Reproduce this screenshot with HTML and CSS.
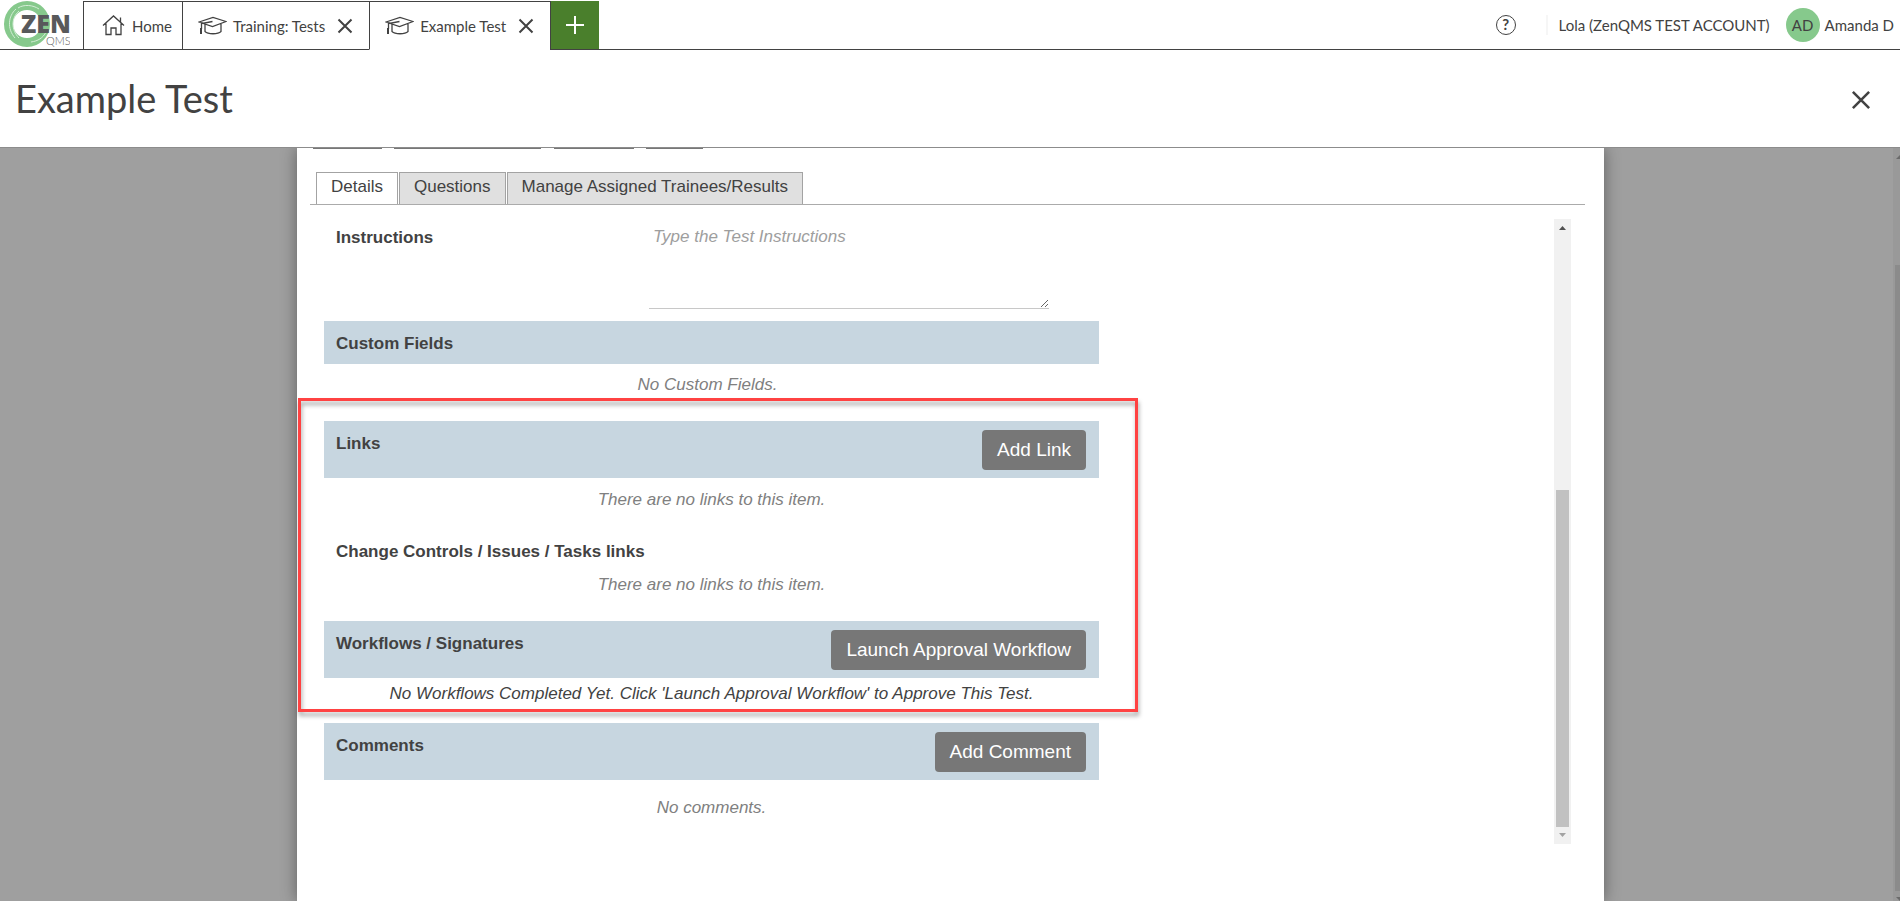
FILE: index.html
```html
<!DOCTYPE html>
<html lang="en">
<head>
<meta charset="utf-8">
<title>Example Test</title>
<link rel="stylesheet" href="styles.css">
</head>
<body>
<svg class="defs" aria-hidden="true">
  <symbol id="cap" viewBox="0 0 29 19">
    <path d="M1 6 L15 1.500 L28 5.500 L14.500 10.500 Z M14.500 5.500 L3.500 7.500 V13 M7 8.500 V15.500 C10 18.500 20 18.500 23 15.500 V8"/>
    <path class="tassel" d="M3 12 V18"/>
  </symbol>
  <symbol id="cross" viewBox="0 0 16 16"><path d="M1.500 1.500 L14.500 14.500 M14.500 1.500 L1.500 14.500"/></symbol>
</svg>
<header class="topbar">
  <a class="logo" href="#" aria-label="ZenQMS">
    <svg width="70" height="48" viewBox="0 0 70 48">
      <circle cx="27" cy="24" r="18.500" fill="none" stroke="#86c98c" stroke-width="9"/>
      <path d="M16 9 C8 16 7 29 15 38 M19 11 C11 18 11 30 19 38 M31 42 C38 41 43 38 46 32 M18 8 C24 4 33 5 39 9" fill="none" stroke="#d4edd6" stroke-width="1"/>
      <text class="logo-zen" x="21" y="33">ZEN</text>
      <text class="logo-qms" x="46" y="45">QMS</text>
    </svg>
  </a>
  <nav class="apptabs">
    <a class="apptab home" href="#">
      <svg class="icon" width="23" height="21" viewBox="0 0 23 21"><path d="M1 10.500 L11.500 1 L22 10.500 M4 8.500 V19.500 H9 V13 H14 V19.500 H19 V8.500 M18.500 7 V2.500"/></svg>
      <span>Home</span>
    </a>
    <div class="apptab">
      <svg class="icon" width="29" height="19"><use href="#cap"/></svg>
      <a href="#">Training: Tests</a>
      <button class="close" aria-label="Close Training: Tests"><svg class="icon bold" width="16" height="16"><use href="#cross"/></svg></button>
    </div>
    <div class="apptab active">
      <svg class="icon" width="29" height="19"><use href="#cap"/></svg>
      <a href="#">Example Test</a>
      <button class="close" aria-label="Close Example Test"><svg class="icon bold" width="16" height="16"><use href="#cross"/></svg></button>
    </div>
    <button class="newtab" aria-label="New tab"><svg width="20" height="20" viewBox="0 0 20 20"><path d="M10 1 V19 M1 10 H19"/></svg></button>
  </nav>
  <div class="account">
    <button class="help" aria-label="Help">?</button>
    <span class="company">Lola (ZenQMS TEST ACCOUNT)</span>
    <span class="avatar">AD</span>
    <span class="user">Amanda D</span>
  </div>
</header>
<div class="titlebar">
  <h1>Example Test</h1>
  <button class="close" aria-label="Close"><svg class="icon heavy" width="20" height="20"><use href="#cross"/></svg></button>
</div>
<main class="stage">
  <div class="panel">
    <div class="clipped"><i class="c1"></i><i class="c2"></i><i class="c3"></i><i class="c4"></i></div>
    <div class="tabs" role="tablist">
      <button class="tab selected" role="tab">Details</button>
      <button class="tab" role="tab">Questions</button>
      <button class="tab" role="tab">Manage Assigned Trainees/Results</button>
    </div>
    <div class="scroller">
      <div class="form">
        <div class="field">
          <label for="instructions">Instructions</label>
          <textarea id="instructions" placeholder="Type the Test Instructions"></textarea>
        </div>
        <div class="bar"><h2>Custom Fields</h2></div>
        <p class="note custom">No Custom Fields.</p>
        <div class="marked">
          <div class="bar tall"><h2>Links</h2><button class="action">Add Link</button></div>
          <p class="note links">There are no links to this item.</p>
          <h2 class="sub">Change Controls / Issues / Tasks links</h2>
          <p class="note sublinks">There are no links to this item.</p>
          <div class="bar tall"><h2>Workflows / Signatures</h2><button class="action">Launch Approval Workflow</button></div>
          <p class="note dark">No Workflows Completed Yet. Click 'Launch Approval Workflow' to Approve This Test.</p>
          <div class="marker"></div>
        </div>
        <div class="bar tall"><h2>Comments</h2><button class="action">Add Comment</button></div>
        <p class="note comments">No comments.</p>
      </div>
      <div class="scrollbar">
        <svg width="7" height="4" viewBox="0 0 7 4"><path d="M0 4 L3.500 0 L7 4 Z" fill="#505050"/></svg>
        <div class="track"><div class="thumb"></div></div>
        <svg width="7" height="4" viewBox="0 0 7 4"><path d="M0 0 L3.500 4 L7 0 Z" fill="#a3a3a3"/></svg>
      </div>
    </div>
  </div>
  <div class="pagebar">
    <svg width="5" height="4" viewBox="0 0 5 4"><path d="M1 4 L5 0 V4 Z" fill="#6a6a6a"/></svg>
    <div class="pagethumb"></div>
    <svg width="5" height="4" viewBox="0 0 5 4"><path d="M1 0 H5 V4 Z" fill="#6a6a6a"/></svg>
  </div>
</main>
</body>
</html>
```

FILE: styles.css
```css
* { box-sizing: border-box; }
body {
  margin: 0;
  min-height: 100vh;
  display: flex;
  flex-direction: column;
  color: #424242;
  background: #fff;
  font: 17px/20px "Liberation Sans", Arial, sans-serif;
}
button { font: inherit; color: inherit; border: 0; padding: 0; background: none; cursor: pointer; }
a { color: inherit; text-decoration: none; }
h1, h2, p { margin: 0; }
svg { display: block; flex: none; }
.defs { position: absolute; width: 0; height: 0; }
.icon { fill: none; stroke: #424242; stroke-width: 1.3px; }
.tassel { stroke-width: 2px; }
.bold { stroke-width: 2px; }
.heavy { stroke-width: 2px; }

.topbar {
  display: flex;
  height: 50px;
  font: 15px/20px Lato, sans-serif;
}
.logo { width: 83px; border-bottom: 1px solid #424242; }
.logo-zen { font: 800 25px "Open Sans", sans-serif; fill: #58595b; }
.logo-qms { font: 300 11px Lato, sans-serif; fill: #58595b; }
.apptabs { display: flex; padding-top: 1px; }
.apptab {
  display: flex;
  align-items: center;
  gap: 6px;
  padding: 0 16px 0 15px;
  border-top: 1px solid #424242;
  border-left: 1px solid #424242;
  border-bottom: 1px solid #424242;
}
.home { padding: 0 10px 0 18px; gap: 7px; }
.active { border-bottom-color: #fff; }
.apptab .close { margin-left: 6px; }
.newtab {
  display: grid;
  place-items: center;
  width: 49px;
  background: #4a7f2c;
  border-left: 1px solid #424242;
  border-bottom: 1px solid #424242;
}
.newtab path { fill: none; stroke: #fff; stroke-width: 2px; }
.account {
  flex: 1;
  display: flex;
  align-items: center;
  justify-content: flex-end;
  padding-right: 6px;
  border-bottom: 1px solid #424242;
}
.help {
  width: 20px;
  height: 20px;
  border: 1px solid #424242;
  border-radius: 50%;
  font-weight: 700;
  font-size: 15px;
  line-height: 17px;
  margin-right: 30px;
}
.company { padding-left: 11px; border-left: 2px solid #f6f6f6; }
.avatar {
  width: 34px;
  height: 34px;
  margin: 0 5px 0 16px;
  border-radius: 50%;
  background: #86c98c;
  line-height: 34px;
  text-align: center;
}

.titlebar {
  display: flex;
  align-items: center;
  justify-content: space-between;
  height: 98px;
  padding: 2px 29px 0 15px;
  border-bottom: 1px solid #8c8c8c;
}
h1 { padding-bottom: 4px; font: 400 38px/48px Lato, sans-serif; }

.stage {
  flex: 1;
  display: flex;
  overflow: hidden;
  background: #9f9f9f;
}
.panel {
  flex: 1;
  margin: 0 289px 0 297px;
  padding: 0 19px 0 13px;
  background: #fff;
  box-shadow: 0 0 15px rgba(0, 0, 0, .4);
}
.clipped { display: flex; padding-left: 3px; height: 1px; }
.clipped i { background: #777; }
.c1 { width: 69px; margin-right: 12px; }
.c2 { width: 147px; margin-right: 13px; }
.c3 { width: 80px; margin-right: 12px; }
.c4 { width: 57px; }
.tabs {
  display: flex;
  gap: 1px;
  margin-top: 23px;
  padding-left: 6px;
  border-bottom: 1px solid #ababab;
}
.tab {
  height: 32px;
  padding: 0 14px 4px;
  border: 1px solid #a3a3a3;
  border-bottom: 0;
  background: #e0e0e0;
}
.tab.selected { background: #fff; }

.scroller {
  display: flex;
  justify-content: space-between;
  margin: 14px 14px 0 14px;
  height: 625px;
}
.form { width: 775px; }
.field { display: flex; justify-content: space-between; height: 102px; padding: 0 50px 0 12px; }
label { padding-top: 9px; font-weight: 700; }
textarea {
  width: 400px;
  height: 90px;
  padding: 8px 4px;
  border: 0;
  border-bottom: 1px solid #c8c8c8;
  font: 17px/20px "Liberation Sans", Arial, sans-serif;
  resize: vertical;
}
textarea::placeholder { color: #9e9e9e; font-style: italic; }
.bar {
  display: flex;
  justify-content: space-between;
  padding: 13px 13px 10px 12px;
  background: #c7d6e0;
}
h2 { font-size: 17px; line-height: 20px; }
.tall { height: 57px; padding-top: 9px; }
.tall h2 { padding-top: 4px; }
.action {
  height: 40px;
  padding: 0 15px;
  border-radius: 4px;
  background: #777;
  color: #fff;
  font-size: 19px;
}
.note { text-align: center; font-style: italic; color: #808080; }
.custom { padding: 11px 8px 26px 0; }
.marked { position: relative; }
.links { padding: 12px 0 32px; }
.sub { padding-left: 12px; }
.sublinks { padding: 13px 0 26px; }
.dark { padding: 6px 0 19px; color: #424242; }
.comments { padding-top: 18px; }
.marker {
  position: absolute;
  inset: -23px -39px 11px -26px;
  border: 3px solid #ff4242;
  filter: drop-shadow(1px 4px 2px rgba(0, 0, 0, .35));
  pointer-events: none;
}

.scrollbar {
  display: flex;
  flex-direction: column;
  align-items: center;
  width: 17px;
  padding: 7px 0;
  background: #f1f1f1;
}
.track { flex: 1; display: flex; align-items: flex-end; padding: 6px 0; }
.thumb { width: 13px; height: 57%; background: #c1c1c1; }
.pagebar {
  display: flex;
  flex-direction: column;
  width: 7px;
  padding: 7px 0 0 2px;
  background: #999;
}
.pagethumb { flex: 1; margin: 106px 0 6px; background: #8b8b8b; }
```
